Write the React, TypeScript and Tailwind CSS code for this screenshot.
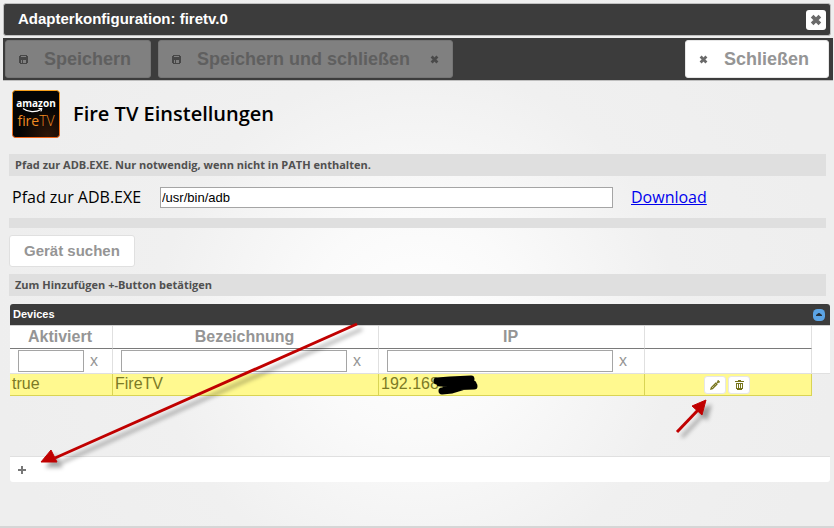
import type { ReactNode } from "react";

type Device = {
  enabled: boolean;
  name: string;
  ip: string;
};

const devices: Device[] = [{ enabled: true, name: "FireTV", ip: "192.168" }];

const SaveIcon = () => (
  <svg viewBox="0 0 9 9" className="w-[9px] h-[9px]" shapeRendering="crispEdges" aria-hidden="true">
    <path
      fill="#474747"
      fillRule="evenodd"
      d="M1 0h7v1h1v7H8v1H1V8H0V1h1zM2 1v1h5V1zM2 5v3h1V5zM4 5v3h3V5z"
    />
  </svg>
);

const CrossIcon = ({ className }: { className: string }) => (
  <svg viewBox="0 0 9 9" className={className} aria-hidden="true">
    <path d="M1.6 1.6 7.4 7.4M7.4 1.6 1.6 7.4" stroke="currentColor" strokeWidth="2.8" fill="none" />
  </svg>
);

const PencilIcon = () => (
  <svg viewBox="0 0 10 10" className="w-[10px] h-[10px]" aria-hidden="true">
    <path fill="currentColor" d="M0 10 .8 7.2 5.8 2.2 7.8 4.2 2.8 9.2zM6.4 2.2 7.6 1V0h1.2v1.2H10v1.2H9L7.8 3.6z" />
    <path d="M2 8 6 4" stroke="#fff" strokeWidth=".8" strokeDasharray="1 1" />
  </svg>
);

const TrashIcon = () => (
  <svg viewBox="0 0 9 10" className="w-[9px] h-[10px]" shapeRendering="crispEdges" aria-hidden="true">
    <path
      fill="currentColor"
      fillRule="evenodd"
      d="M3 0h3v1h3v1H0V1h3zM1 3h7v6H7v1H2V9H1zM2 4v4h1V4zM4 4v4h1V4zM6 4v4h1V4z"
    />
  </svg>
);

const Logo = () => (
  <svg viewBox="0 0 48 48" className="w-12 h-12 shrink-0" role="img" aria-label="amazon fireTV">
    <defs>
      <linearGradient id="edge" x1="0" y1="0" x2="0" y2="1">
        <stop offset="0" stopColor="#f7a01c" />
        <stop offset="1" stopColor="#f0641a" />
      </linearGradient>
      <radialGradient id="glow" cx=".75" cy=".95" r=".6">
        <stop offset="0" stopColor="#2e1608" />
        <stop offset="1" stopColor="#040404" />
      </radialGradient>
    </defs>
    <rect x=".5" y=".5" width="47" height="47" rx="3" fill="url(#glow)" stroke="url(#edge)" />
    <text x="24" y="17" textAnchor="middle" fill="#fff" fontFamily="Open Sans" fontWeight="700" fontSize="10">
      amazon
    </text>
    <path d="M11 18.5C16 22.5 24 22.5 29 19.5" stroke="#fff" strokeWidth="1.3" fill="none" />
    <path d="M26.500 18.500h3.500l-1 3" stroke="#fff" fill="none" />
    <text x="24" y="36" textAnchor="middle" fill="#f08c22" fontFamily="Open Sans" fontSize="14">
      fire
      <tspan fontWeight="300">TV</tspan>
    </text>
  </svg>
);

const SectionBar = ({ children }: { children?: ReactNode }) => (
  <div className="min-h-[10px] bg-[#dfdfdf] px-1.5 font-['Open_Sans',sans-serif] text-[11px] leading-[22px] font-bold text-[#505050]">
    {children}
  </div>
);

const FilterCell = ({ label }: { label: string }) => (
  <td className="h-[25px] border-r border-b border-[#e0e0e0] p-0 pl-2">
    <div className="flex items-center">
      <input
        type="text"
        aria-label={label}
        className="h-[22px] w-0 min-w-[66px] flex-1 border border-[#a5a5a5] bg-white px-1 text-[13px] text-black"
      />
      <button
        type="button"
        aria-label={`${label} löschen`}
        className="w-[31px] min-w-0 pl-1.5 text-left leading-5"
      >
        x
      </button>
    </div>
  </td>
);

const Annotations = () => (
  <svg
    className="pointer-events-none absolute top-0 left-0 h-[180px] w-[820px] overflow-visible"
    viewBox="0 0 820 180"
    aria-hidden="true"
  >
    <g className="drop-shadow-[5px_5px_2px_rgba(0,0,0,0.35)]" fill="#c00000" stroke="#c00000">
      <path d="M347 20 45 154" strokeWidth="3" />
      <path d="M31 158 41 146 47 158z" strokeWidth="1" />
    </g>
    <g className="drop-shadow-[5px_5px_2px_rgba(0,0,0,0.35)]" fill="#c00000" stroke="#c00000">
      <path d="M667 128 689 105" strokeWidth="3" />
      <path d="M696 96 682 102 692 111z" strokeWidth="1" />
    </g>
    <path
      d="M427 77 440 76 461 75M430 79 463 80M436 83 464 82M432 87 442 86 452 83"
      stroke="#000"
      strokeWidth="7"
      strokeLinecap="round"
      strokeLinejoin="round"
      fill="none"
    />
  </svg>
);

const DeviceTable = () => (
  <section className="relative mt-2 mr-1 ml-2.5">
    <header className="flex h-[21px] items-center justify-between rounded-t-[3px] bg-[#3c3c3c] pr-[5px] pl-[3px]">
      <h2 className="text-[11px] font-bold text-white">Devices</h2>
      <button type="button" aria-label="Einklappen" className="h-3 w-3">
        <svg viewBox="0 0 12 12" className="h-3 w-3" aria-hidden="true">
          <rect width="12" height="12" rx="4.5" fill="#5ba4e5" />
          <path d="M3 7h6v-1L6.5 4h-1L3 6z" fill="#26323c" />
        </svg>
      </button>
    </header>
    <div className="h-[131px] border-t border-[#d0d0d0]">
      <table className="w-full table-fixed border-separate border-spacing-0 text-base leading-5 text-[#959595]">
        <colgroup>
          <col className="w-[103px]" />
          <col />
          <col />
          <col className="w-[167px]" />
          <col className="w-[18px]" />
        </colgroup>
        <thead className="bg-white">
          <tr>
            {["Aktiviert", "Bezeichnung", "IP", ""].map((title) => (
              <th
                key={title}
                scope="col"
                className="h-[23px] border-r border-b border-r-[#e0e0e0] border-b-[#7a7a7a] p-0 pr-0.5 font-bold"
              >
                {title}
              </th>
            ))}
            <td />
          </tr>
          <tr>
            <FilterCell label="Aktiviert" />
            <FilterCell label="Bezeichnung" />
            <FilterCell label="IP" />
            <td className="border-r border-b border-[#e0e0e0]" />
            <td className="border-b border-[#e0e0e0]" />
          </tr>
        </thead>
        <tbody>
          {devices.map((device) => (
            <tr key={device.name} className="leading-[18px] text-[#7b7a26]">
              <td className="h-[22px] border-r border-b border-[#d9d455] bg-[#fff98f] p-0 pb-0.5 pl-0.5">
                {String(device.enabled)}
              </td>
              <td className="border-r border-b border-[#d9d455] bg-[#fff98f] p-0 pb-0.5 pl-0.5">{device.name}</td>
              <td className="border-r border-b border-[#d9d455] bg-[#fff98f] p-0 pb-0.5 pl-0.5">{device.ip}</td>
              <td className="border-r border-b border-[#d9d455] bg-[#fff98f] p-0 pr-0.5">
                <div className="flex justify-center gap-0.5 text-[#77741c]">
                  <button
                    type="button"
                    aria-label="Bearbeiten"
                    className="flex h-[18px] w-[22px] items-center justify-center rounded-[3px] border border-[#e6e6e6] bg-white"
                  >
                    <PencilIcon />
                  </button>
                  <button
                    type="button"
                    aria-label="Entfernen"
                    className="flex h-[18px] w-[22px] items-center justify-center rounded-[3px] border border-[#e6e6e6] bg-white"
                  >
                    <TrashIcon />
                  </button>
                </div>
              </td>
              <td />
            </tr>
          ))}
        </tbody>
      </table>
    </div>
    <footer className="flex h-[26px] items-center rounded-b-[3px] border-t border-[#e0e0e0] bg-white pl-2">
      <button type="button" aria-label="Hinzufügen" className="text-[#777777]">
        <svg viewBox="0 0 8 8" className="block h-2 w-2" shapeRendering="crispEdges" aria-hidden="true">
          <path d="M3 0h2v3h3v2H5v3H3V5H0V3h3z" fill="currentColor" />
        </svg>
      </button>
    </footer>
    <Annotations />
  </section>
);

const App = () => {
  return (
    <main className="flex min-h-screen flex-col border-b-2 border-[#d6d6d6] bg-[#eeeeee] bg-[radial-gradient(circle_at_50%_62%,#ffffff_0,#fafafa_110px,#f0f0f0_260px,#eeeeee_420px)] font-['Liberation_Sans',Arial,sans-serif]">
      <header className="mx-[3px] mt-[3px] flex h-[33px] items-center justify-between rounded-[3px] border border-[#c0c0c0] bg-[#3c3c3c] pr-1 pl-3.5">
        <h1 className="text-[15px] font-bold text-white">Adapterkonfiguration: firetv.0</h1>
        <button
          type="button"
          aria-label="Dialog schließen"
          className="flex h-5 w-5 items-center justify-center rounded-[3px] bg-white text-[#6a6a6a]"
        >
          <CrossIcon className="h-3 w-3" />
        </button>
      </header>

      <div className="mt-0.5 mr-px ml-[3px] flex h-[43px] items-center border-b border-[#bfbfbf] bg-[#3c3c3c] pr-1 pl-0.5 text-lg leading-9 font-bold">
        <button
          type="button"
          disabled
          className="flex h-[38px] items-center gap-4 rounded-[3px] border border-[#757575] bg-[#808080] pr-[19px] pl-[13px] text-[#5f5f5f]"
        >
          <SaveIcon />
          Speichern
        </button>
        <button
          type="button"
          disabled
          className="ml-[7px] flex h-[38px] items-center gap-4 rounded-[3px] border border-[#757575] bg-[#808080] px-[13px] text-[#5f5f5f]"
        >
          <SaveIcon />
          Speichern und schließen
          <CrossIcon className="ml-1 h-[9px] w-[9px] text-[#4a4a4a]" />
        </button>
        <button
          type="button"
          className="ml-auto flex h-[38px] items-center gap-4 rounded-[3px] border border-[#e6e6e6] bg-white pr-[19px] pl-[13px] text-[#959595]"
        >
          <CrossIcon className="h-[9px] w-[9px] text-[#6a6a6a]" />
          Schließen
        </button>
      </div>

      <div className="flex items-center gap-[13px] px-3 pt-[9px] pb-4">
        <Logo />
        <h2 className="font-['Open_Sans',sans-serif] text-xl leading-6 font-semibold text-black">
          Fire TV Einstellungen
        </h2>
      </div>

      <div className="mr-2 ml-[9px]">
        <SectionBar>Pfad zur ADB.EXE. Nur notwendig, wenn nicht in PATH enthalten.</SectionBar>
        <div className="flex h-[42px] items-center pl-[3px] font-['Open_Sans',sans-serif] text-base text-black">
          <label htmlFor="adb" className="w-[148px] shrink-0">
            Pfad zur ADB.EXE
          </label>
          <input
            id="adb"
            type="text"
            defaultValue="/usr/bin/adb"
            className="h-[21px] min-w-0 flex-1 border border-[#a5a5a5] bg-white px-px font-['Liberation_Sans',Arial,sans-serif] text-[13px]"
          />
          <div className="w-[213px] shrink-0 pl-[18px]">
            <a href="#download" className="text-[#0000ee] underline">
              Download
            </a>
          </div>
        </div>
        <SectionBar />
        <button
          type="button"
          className="my-[7px] block h-[32px] rounded-[3px] border border-[#e0e0e0] bg-white px-3.5 text-[15px] font-bold text-[#959595]"
        >
          Gerät suchen
        </button>
        <SectionBar>Zum Hinzufügen +-Button betätigen</SectionBar>
      </div>

      <DeviceTable />
    </main>
  );
};

export default App;
